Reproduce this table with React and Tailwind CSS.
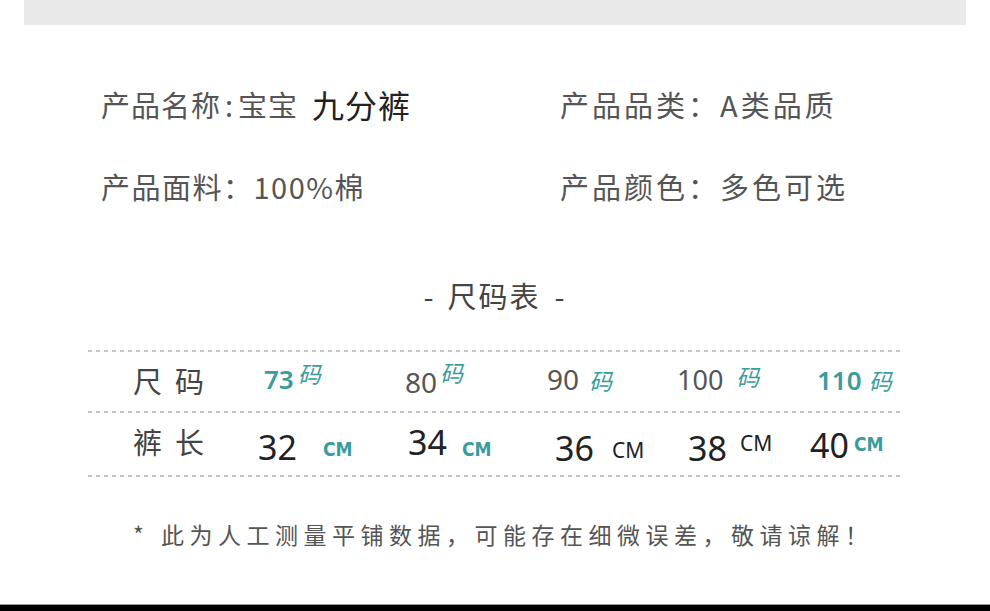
import React from 'react';

const dotted =
  'h-[2px] bg-[repeating-linear-gradient(90deg,#c6c6c6_0px,#c6c6c6_4px,transparent_4px,transparent_8px)]';

const sizeRow = [
  { num: '73', cell: 'pl-[14px]', numCls: 'text-[26px] font-semibold text-[#3a9c9c] mb-[5px]', unitCls: 'ml-[4px] mb-[17px]' },
  { num: '80', cell: 'pl-[10px]', numCls: 'text-[28px] text-[#555]', unitCls: 'ml-[3px] mb-[19px]' },
  { num: '90', cell: 'pl-[7px]', numCls: 'text-[28px] text-[#555] mb-[5px]', unitCls: 'ml-[10px] mb-[3px]' },
  { num: '100', cell: 'pl-[7px]', numCls: 'text-[27px] text-[#555] mb-[5px]', unitCls: 'ml-[13px] mb-[11px]' },
  { num: '110', cell: 'pl-[12px]', numCls: 'text-[26px] font-semibold text-[#3a9c9c] mb-[3px]', unitCls: 'ml-[7px] mb-[3px]' },
];

const lengthRow = [
  { num: '32', cell: 'pl-[8px]', numCls: 'mt-[6px]', unit: 'teal', unitCls: 'ml-[26px] mt-[10px]' },
  { num: '34', cell: 'pl-[13px]', numCls: 'mb-[4px]', unit: 'teal', unitCls: 'ml-[15px] mt-[10px]' },
  { num: '36', cell: 'pl-[15px]', numCls: 'mt-[8px]', unit: 'plain', unitCls: 'ml-[18px] mt-[12px]' },
  { num: '38', cell: 'pl-[18px]', numCls: 'mt-[8px]', unit: 'plain', unitCls: 'ml-[13px] mb-[2px]' },
  { num: '40', cell: 'pl-[5px]', numCls: 'mt-[2px]', unit: 'teal', unitCls: 'ml-[5px]' },
];

const App = () => {
  return (
    <div className="w-[990px] h-[611px] bg-white flex flex-col overflow-hidden font-['Noto_Sans_CJK_SC','Noto_Sans',sans-serif]">
      <div className="mx-[24px] h-[25px] shrink-0 bg-[#e9e9e9]" />

      {/* product info */}
      <div className="mt-[59px] pl-[101px] grid grid-cols-[459px_1fr] gap-y-[42px] text-[29px] text-[#555]">
        <div className="h-[40px] leading-[40px] flex items-center tracking-[1px]">
          <span>产品名称</span>
          <span className="mx-[4px]">:</span>
          <span>宝宝</span>
          <span className="ml-[14px] text-[32px] text-[#222]">九分裤</span>
        </div>
        <div className="h-[40px] leading-[40px] tracking-[3px]">产品品类：A类品质</div>
        <div className="h-[40px] leading-[40px] tracking-[1.5px]">产品面料：100%棉</div>
        <div className="h-[40px] leading-[40px] tracking-[3px]">产品颜色：多色可选</div>
      </div>

      {/* title */}
      <div className="mt-[69px] h-[40px] leading-[40px] text-center text-[29px] text-[#444] pr-[2px]">
        <span>-</span>
        <span className="mx-[14px] tracking-[2px]">尺码表</span>
        <span>-</span>
      </div>

      {/* size table */}
      <div className="mt-[35px] ml-[88px] w-[815px]">
        <div className={dotted} />
        <div className="h-[59px] grid grid-cols-[162px_145px_145px_130px_135px_1fr]">
          <div className="pl-[45px] flex items-center text-[29px] leading-none text-[#444] tracking-[13px] mb-[3px]">尺码</div>
          {sizeRow.map((s) => (
            <div key={s.num} className={`flex items-center ${s.cell}`}>
              <span className={`leading-none font-['Noto_Sans',sans-serif] ${s.numCls}`}>{s.num}</span>
              <span className={`text-[23px] leading-none italic text-[#3a9c9c] ${s.unitCls}`}>码</span>
            </div>
          ))}
        </div>
        <div className={dotted} />
        <div className="h-[62px] grid grid-cols-[162px_145px_145px_130px_135px_1fr]">
          <div className="pl-[45px] flex items-center text-[29px] leading-none text-[#444] tracking-[13px] mb-[6px]">裤长</div>
          {lengthRow.map((l) => (
            <div key={l.num} className={`flex items-center ${l.cell}`}>
              <span className={`text-[34px] leading-none text-[#222] font-['Noto_Sans',sans-serif] ${l.numCls}`}>{l.num}</span>
              {l.unit === 'teal' ? (
                <span className={`text-[19px] leading-none font-bold font-stretch-condensed text-[#3a9c9c] font-['DejaVu_Sans_Condensed','DejaVu_Sans',sans-serif] ${l.unitCls}`}>CM</span>
              ) : (
                <span className={`text-[21px] leading-none text-[#222] font-['Noto_Sans',sans-serif] ${l.unitCls}`}>CM</span>
              )}
            </div>
          ))}
        </div>
        <div className={dotted} />
      </div>

      {/* footnote */}
      <div className="mt-[42px] pl-[133px] h-[30px] leading-[30px] text-[23px] text-[#555] tracking-[5.5px]">
        <span className="mr-[1px]">*</span> 此为人工测量平铺数据，可能存在细微误差，敬请谅解！
      </div>

      <div className="mt-auto h-[7px] shrink-0 border-t border-[#9a9a9a] bg-black" />
    </div>
  );
};

export default App;
